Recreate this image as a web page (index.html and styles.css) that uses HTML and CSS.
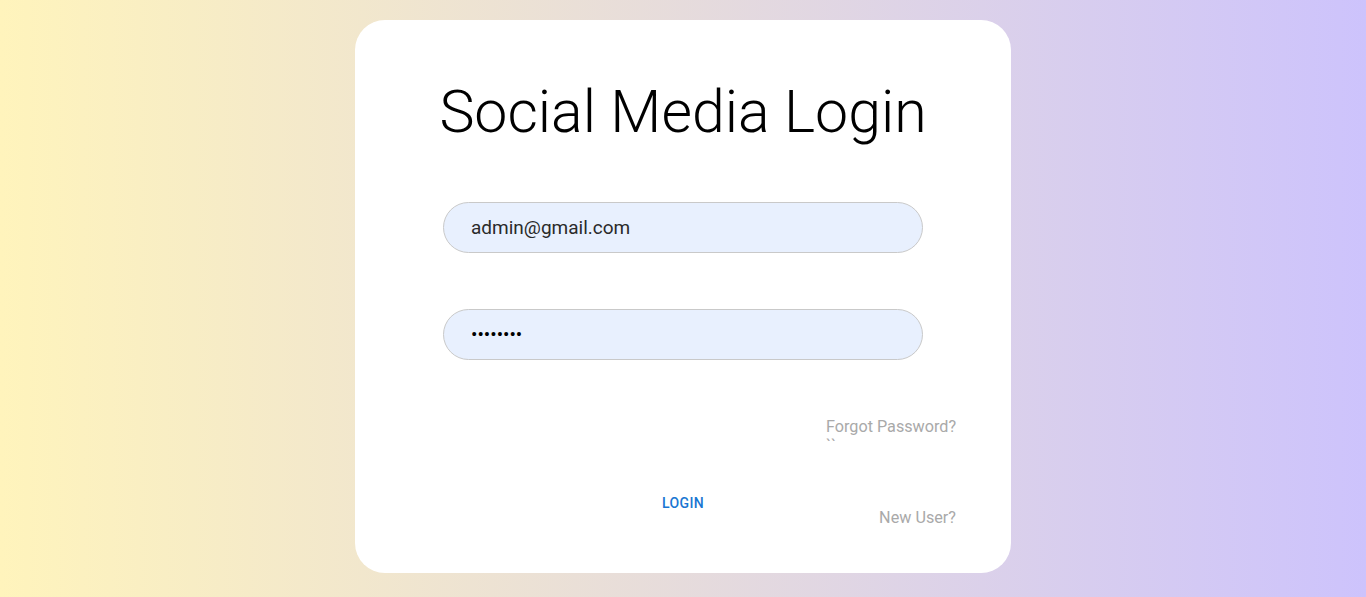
FILE: index.html
```html
<!DOCTYPE html>
<html lang="en">
<head>
<meta charset="utf-8">
<title>Social Media Login</title>
<link rel="stylesheet" href="styles.css">
</head>
<body>
<main class="page">
  <section class="card">
    <h1 class="title">Social Media Login</h1>
    <form class="form">
      <input class="field" type="email" value="admin@gmail.com">
      <input class="field field-pass" type="password" value="password">
    </form>
    <div class="links">
      <div class="forgot">
        <span class="link">Forgot Password?</span>
        <span class="link">``</span>
      </div>
    </div>
    <div class="actions">
      <button class="login" type="button">Login</button>
      <span class="link newuser">New User?</span>
    </div>
  </section>
</main>
</body>
</html>
```
FILE: styles.css
```css
* { box-sizing: border-box; }
html, body { margin: 0; padding: 0; }
body {
  height: 597px;
  overflow: hidden;
  font-family: Roboto, "Liberation Sans", sans-serif;
  background: linear-gradient(to right, #fff4bc, #cdc3fc);
}
.page {
  display: flex;
  justify-content: center;
  padding-top: 20px;
}
.card {
  width: 656px;
  height: 553px;
  background: #fff;
  border-radius: 30px;
  display: flex;
  flex-direction: column;
  padding: 0 55px;
}
.title {
  margin: 50px 0 0;
  font-weight: 300;
  font-size: 59px;
  line-height: 84px;
  text-align: center;
  color: #000;
}
.form {
  display: flex;
  flex-direction: column;
  align-items: center;
  gap: 56px;
  margin-top: 48px;
}
.field {
  width: 480px;
  height: 51px;
  border: 1px solid #c9c9c9;
  border-radius: 26px;
  background: #e8f0fe;
  padding: 0 27px;
  font-family: Roboto, "Liberation Sans", sans-serif;
  font-size: 19px;
  color: #2a2a2a;
  outline: none;
}
.field-pass { color: #000; }
.links {
  display: flex;
  justify-content: flex-end;
  margin-top: 56px;
}
.forgot {
  display: flex;
  flex-direction: column;
  width: 130px;
  padding-top: 1px;
}
.link {
  color: #a9a9a9;
  font-size: 16.2px;
  line-height: 19px;
  white-space: nowrap;
}
.actions {
  display: grid;
  grid-template-columns: 1fr auto 1fr;
  margin-top: 30px;
}
.login {
  grid-column: 2;
  background: none;
  border: 0;
  padding: 6px 8px;
  font-family: Roboto, "Liberation Sans", sans-serif;
  font-weight: 500;
  font-size: 14px;
  letter-spacing: 0.4px;
  text-transform: uppercase;
  color: #1976d2;
  line-height: 24px;
  align-self: start;
}
.newuser {
  grid-column: 3;
  justify-self: end;
  margin-top: 23px;
}
```
